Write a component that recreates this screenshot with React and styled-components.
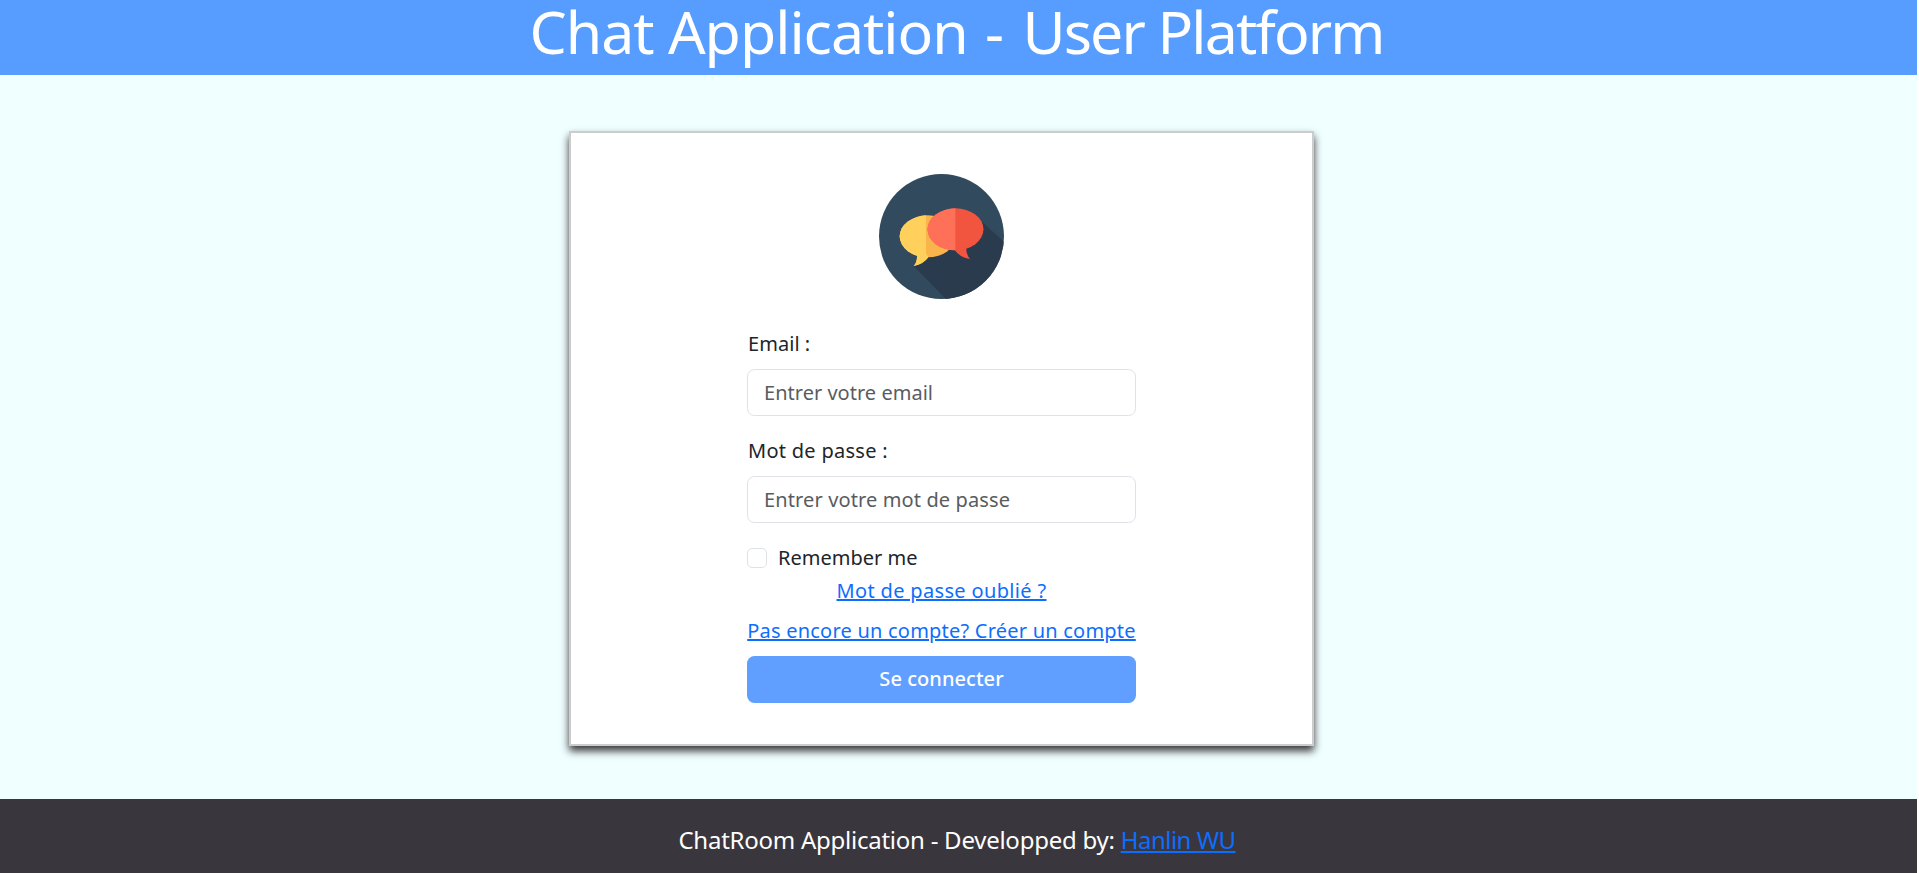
import React from "react";
import styled, { createGlobalStyle } from "styled-components";

const GlobalStyle = createGlobalStyle`
  *, *::before, *::after { box-sizing: border-box; }
  body {
    margin: 0;
    font-family: "Noto Sans", "Open Sans", sans-serif;
    font-size: 20px;
    line-height: 30px;
    color: #212529;
    background: #fff;
  }
`;

const Page = styled.div`
  height: 873px;
  margin-right: 2px;
  display: flex;
  flex-direction: column;
  background: #f0ffff;
`;

const Header = styled.header`
  height: 75px;
  padding-right: 4px;
  background: #569dff;
  color: #fff;
  text-align: center;
`;

const Title = styled.h1`
  margin: 0;
  font-size: 59px;
  font-weight: 400;
  line-height: 62px;
  letter-spacing: -1px;
  white-space: nowrap;
`;

const Dash = styled.span`
  margin: 0 5px 0 3px;
`;

const TitleTail = styled.span`
  letter-spacing: -1.85px;
`;

const Main = styled.main`
  flex: 1;
  padding: 56px 34px 0 0;
  display: flex;
  justify-content: center;
  align-items: flex-start;
`;

const Card = styled.section`
  width: 745px;
  height: 615px;
  padding-top: 41px;
  display: flex;
  flex-direction: column;
  align-items: center;
  background: #fff;
  border: 2px solid #ccc;
  box-shadow: 0 5px 8px #3a363b;
`;

const LogoSvg = styled.svg`
  width: 125px;
  height: 125px;
  display: block;
`;

const Form = styled.form`
  width: 389px;
  margin-top: 30px;
  display: flex;
  flex-direction: column;
`;

const Label = styled.label`
  margin-bottom: 10px;
  padding-left: 1px;
  letter-spacing: ${(p) => p.$spacing || 0}px;
`;

const Input = styled.input`
  height: 47px;
  margin-bottom: 20px;
  padding: 0 16px;
  border: 1px solid #dee2e6;
  border-radius: 7.5px;
  background: #fff;
  font: inherit;
  letter-spacing: ${(p) => p.$spacing || 0}px;
  &::placeholder { color: #595c5f; opacity: 1; }
`;

const CheckRow = styled.label`
  display: flex;
  align-items: center;
  gap: 11px;
  height: 30px;
`;

const Checkbox = styled.input`
  appearance: none;
  width: 20px;
  height: 20px;
  margin: 0;
  border: 1px solid #dee2e6;
  border-radius: 5px;
`;

const Link = styled.a`
  color: #0d6efd;
  text-decoration: underline;
  white-space: nowrap;
  letter-spacing: ${(p) => p.$spacing || 0}px;
`;

const LinkRow = styled.div`
  display: flex;
  justify-content: center;
  margin-top: ${(p) => p.$top || 0}px;
`;

const Submit = styled.button`
  height: 47px;
  margin-top: 10px;
  padding: 0 0 2px;
  border: 0;
  border-radius: 7.5px;
  background: #609fff;
  color: #fff;
  font: inherit;
  font-weight: 500;
  letter-spacing: 0.05px;
`;

const Footer = styled.footer`
  height: 74px;
  padding: 24px 3px 0 0;
  background: #3a363d;
  color: #fff;
  text-align: center;
  font-size: 24px;
  line-height: 34px;
  letter-spacing: -0.25px;
  white-space: nowrap;
`;

const Logo = () => (
  <LogoSvg viewBox="0 0 375 375" aria-hidden="true">
    <defs>
      <clipPath id="disc"><circle cx="187.5" cy="187.5" r="187.5" /></clipPath>
      <clipPath id="leftHalf"><rect x="0" y="0" width="141" height="375" /></clipPath>
      <clipPath id="redLeft"><rect x="0" y="0" width="229" height="375" /></clipPath>
    </defs>
    <g clipPath="url(#disc)">
      <rect width="375" height="375" fill="#324a5e" />
      <path d="M104 276 L310 145 L380 208 V380 H205 Z" fill="#2b3b4e" />
    </g>
    <g fill="#f9b54c">
      <ellipse cx="146" cy="187" rx="84" ry="63" />
      <path d="M114 238 Q116 263 104 276 Q133 271 148 250 Z" />
    </g>
    <g fill="#ffd15c">
      <ellipse cx="146" cy="187" rx="84" ry="63" clipPath="url(#leftHalf)" />
      <path d="M114 238 Q116 263 104 276 Q133 271 148 250 L141 238 Z" />
    </g>
    <g fill="#f1543f">
      <ellipse cx="229.500" cy="166" rx="84" ry="63" />
      <path d="M227 228 Q242 250 273 255 Q261 242 261 216 Z" />
    </g>
    <ellipse cx="229.500" cy="166" rx="84" ry="63" fill="#ff7058" clipPath="url(#redLeft)" />
  </LogoSvg>
);

export default function App() {
  return (
    <>
      <GlobalStyle />
      <Page>
        <Header>
          <Title>
            Chat Application <Dash>-</Dash> <TitleTail>User Platform</TitleTail>
          </Title>
        </Header>
        <Main>
          <Card>
            <Logo />
            <Form onSubmit={(e) => e.preventDefault()}>
              <Label htmlFor="email" $spacing={0.05}>Email :</Label>
              <Input id="email" type="email" placeholder="Entrer votre email" $spacing={0.02} />
              <Label htmlFor="password" $spacing={0.28}>Mot de passe :</Label>
              <Input id="password" type="password" placeholder="Entrer votre mot de passe" $spacing={0.12} />
              <CheckRow>
                <Checkbox type="checkbox" />
                Remember me
              </CheckRow>
              <LinkRow $top={3}>
                <Link href="#" $spacing={0.34}>Mot de passe oublié ?</Link>
              </LinkRow>
              <LinkRow $top={10}>
                <Link href="#" $spacing={0.22}>Pas encore un compte? Créer un compte</Link>
              </LinkRow>
              <Submit type="submit">Se connecter</Submit>
            </Form>
          </Card>
        </Main>
        <Footer>
          ChatRoom Application - Developped by: <Link href="#" $spacing={-0.5}>Hanlin WU</Link>
        </Footer>
      </Page>
    </>
  );
}
